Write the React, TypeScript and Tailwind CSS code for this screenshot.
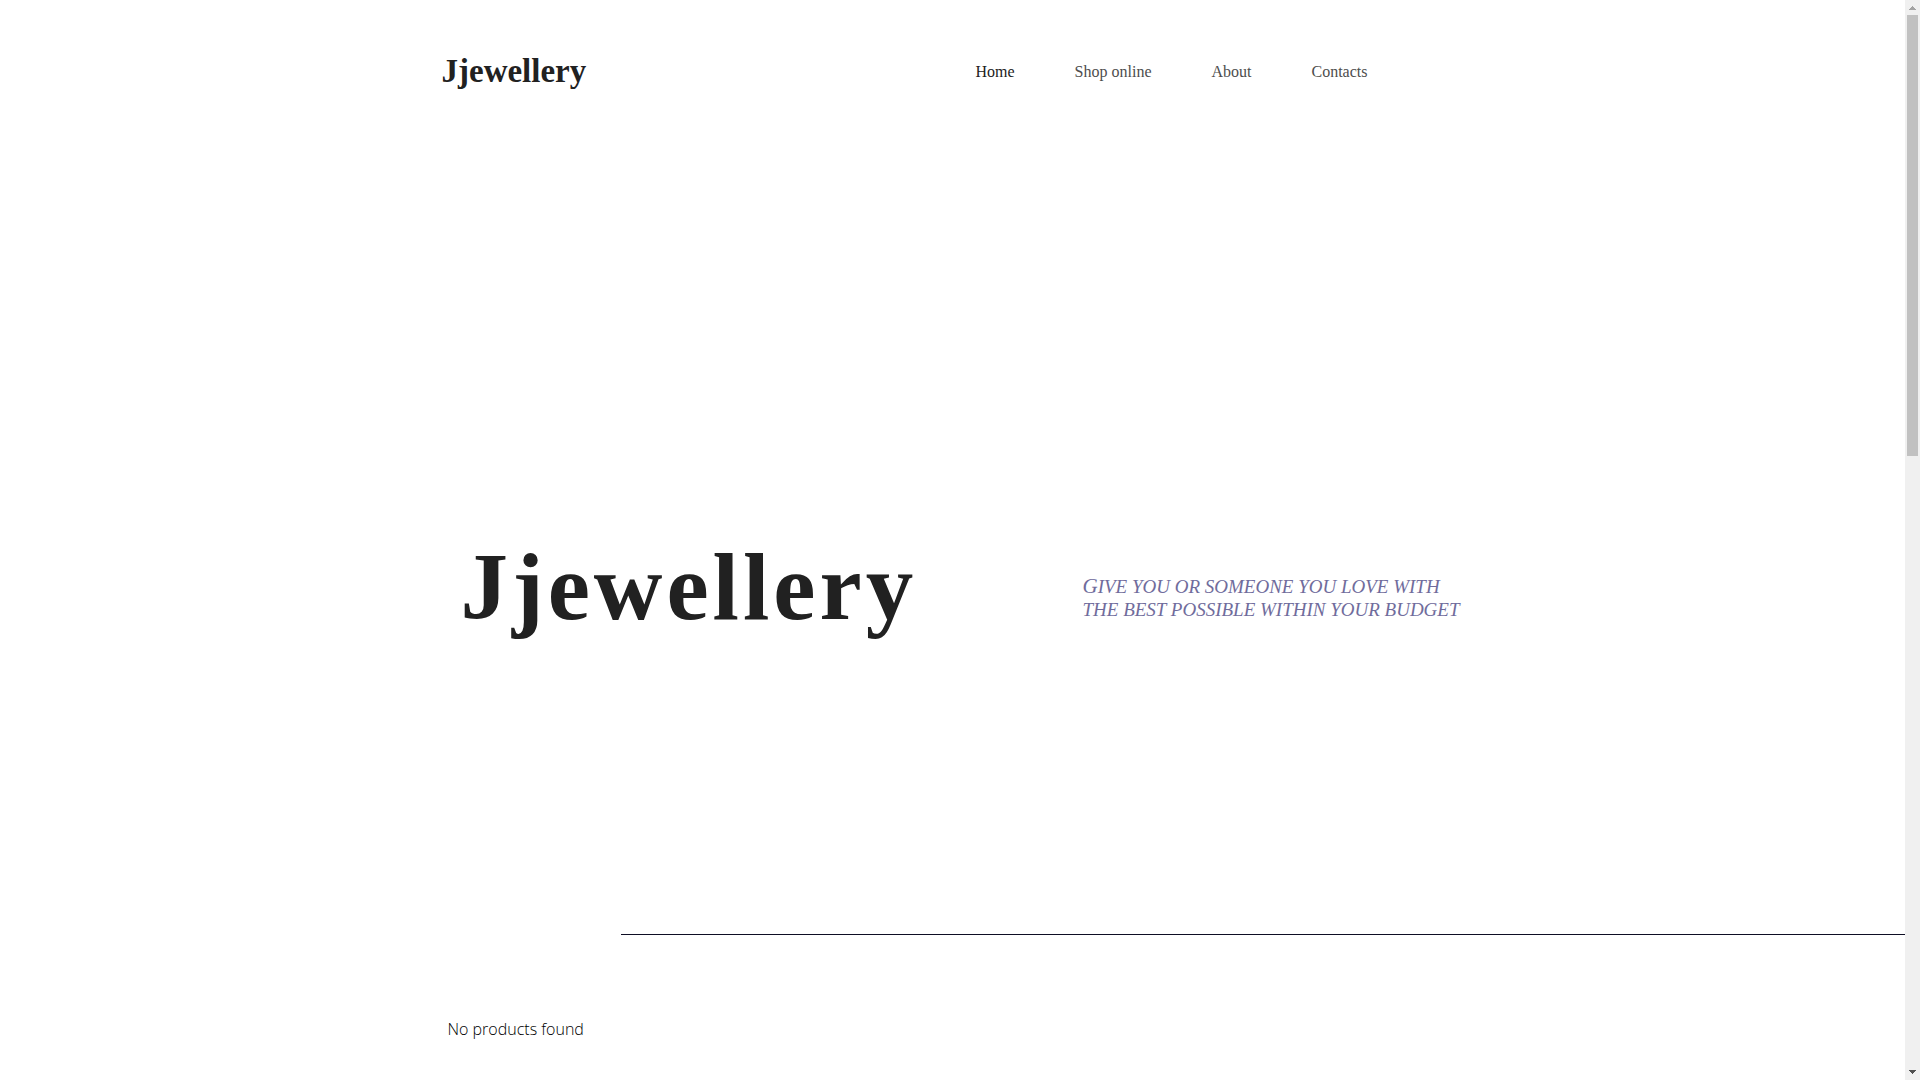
import { clsx } from 'clsx';

const links = [
  { label: 'Home', href: '#home', active: true },
  { label: 'Shop online', href: '#shop' },
  { label: 'About', href: '#about' },
  { label: 'Contacts', href: '#contacts' },
];

function Header() {
  return (
    <header className="w-full max-w-[1022px] mx-auto pt-12 pr-24 flex items-center justify-between">
      <a href="#home" className="text-[33px] leading-[46px] font-bold text-[#212121]">Jjewellery</a>
      <nav className="flex gap-[60px] pt-0.5">
        {links.map((link) => (
          <a
            key={link.label}
            href={link.href}
            className={clsx('text-base leading-6', link.active ? 'text-[#212121]' : 'text-[#4d4d4d]')}
          >
            {link.label}
          </a>
        ))}
      </nav>
    </header>
  );
}

function Hero() {
  return (
    <section id="home" className="w-full max-w-[1020px] mx-auto pt-[438px] pl-[18px] flex items-start justify-between">
      <h1 className="text-[95px] leading-[110px] font-bold tracking-[4px] text-[#212121]">Jjewellery</h1>
      <p className="w-[380px] pt-[43px] text-[19px] leading-[23px] italic uppercase text-[#706c9c] first-letter:text-[21px]">
        Give you or someone you love with
        <br />
        the best possible within your budget
      </p>
    </section>
  );
}

function Products() {
  return (
    <section id="shop" className="pt-[292px]">
      <hr className="ml-[calc(50%-332px)] border-0 h-px bg-[#0e0e24]" />
      <div className="w-full max-w-[1020px] mx-auto px-[5px] pt-[82px]">
        <p className="font-['Open_Sans',sans-serif] font-light text-base leading-6 text-black">No products found</p>
      </div>
    </section>
  );
}

function ScrollRail() {
  return (
    <div aria-hidden="true" className="sticky top-0 h-screen w-[15px] shrink-0 bg-[#f0f0f0] flex flex-col items-center">
      <svg viewBox="0 0 15 15" className="w-[15px] h-[15px] shrink-0" shapeRendering="crispEdges">
        <path d="M7 6h1v1h1v1h1v1h1v1H4V9h1V8h1V7h1z" fill="#a3a3a3" />
      </svg>
      <div className="grow w-full flex justify-center">
        <div className="w-[11px] h-[42%] bg-[#c1c1c1]" />
      </div>
      <svg viewBox="0 0 15 15" className="w-[15px] h-[15px] shrink-0" shapeRendering="crispEdges">
        <path d="M4 5h7v1h-1v1H9v1H8v1H7V8H6V7H5V6H4z" fill="#505050" />
      </svg>
    </div>
  );
}

export default function App() {
  return (
    <div className="flex items-start min-h-screen bg-white font-['Liberation_Serif',serif]">
      <main className="flex-1 min-w-0">
        <Header />
        <Hero />
        <Products />
      </main>
      <ScrollRail />
    </div>
  );
}
